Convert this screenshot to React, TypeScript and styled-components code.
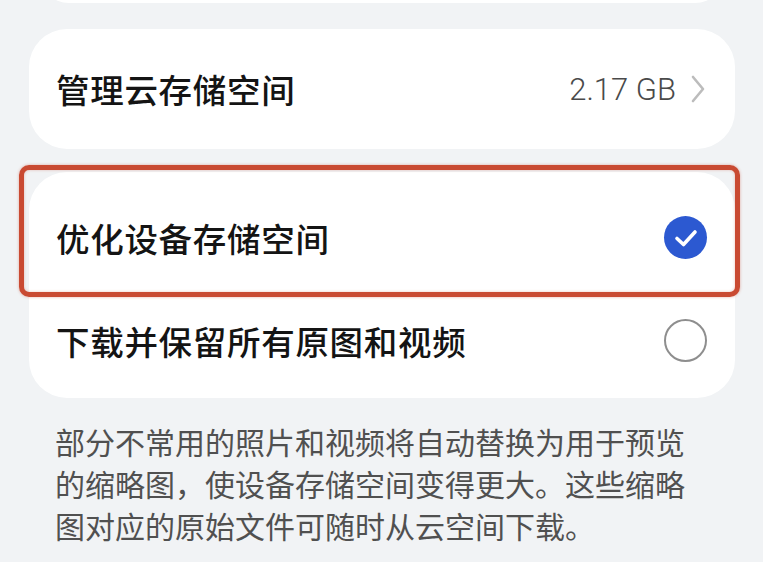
import React from "react";
import styled, { createGlobalStyle } from "styled-components";

const Global = createGlobalStyle`
  html, body { margin: 0; padding: 0; background: #f1f3f5; }
  body { font-family: "Noto Sans CJK SC", "Noto Sans", sans-serif; }
  * { box-sizing: border-box; }
`;

const Page = styled.div`
  width: 763px;
  height: 562px;
  overflow: hidden;
  padding: 0 28px 0 29px;
  display: flex;
  flex-direction: column;
  background: #f1f3f5;
`;

const TopCard = styled.div`
  height: 60px;
  margin: -57px 10px 0 10px;
  background: #fff;
  border-radius: 38px;
  flex-shrink: 0;
`;

const Card = styled.div<{ $mt: number; $pt?: number; $pb?: number }>`
  position: relative;
  margin-top: ${(p) => p.$mt}px;
  background: #fff;
  border-radius: 38px;
  padding: ${(p) => p.$pt ?? 0}px 0 ${(p) => p.$pb ?? 0}px;
  flex-shrink: 0;
`;

const Row = styled.div<{ $h: number }>`
  height: ${(p) => p.$h}px;
  display: flex;
  align-items: center;
  padding: 0 29px 0 27px;
`;

const Label = styled.div`
  flex: 1;
  font-size: 33.5px;
  font-weight: 500;
  color: #141414;
  letter-spacing: 0.7px;
  line-height: 1;
`;

const Value = styled.span`
  font-family: Roboto, "Noto Sans", sans-serif;
  font-weight: 300;
  font-size: 31px;
  color: #4a4a4a;
  margin-right: 14px;
`;

const Highlight = styled.div`
  position: absolute;
  left: -10px;
  top: -7px;
  width: 721px;
  height: 132px;
  border: 5px solid #c94a32;
  border-radius: 10px;
  box-shadow: 0 0 3px rgba(201, 74, 50, 0.45), inset 0 0 3px rgba(201, 74, 50, 0.35);
  pointer-events: none;
`;

const Radio = styled.div<{ $on?: boolean }>`
  width: 43px;
  height: 43px;
  border-radius: 50%;
  display: flex;
  align-items: center;
  justify-content: center;
  background: ${(p) => (p.$on ? "#2c59d1" : "transparent")};
  border: ${(p) => (p.$on ? "none" : "2px solid #8e8e8e")};
  margin-right: -1px;
`;

const Note = styled.p`
  margin: 22px 0 0 0;
  padding: 0 34px 0 26px;
  font-size: 30px;
  line-height: 42px;
  color: #505050;
`;

const Chevron = () => (
  <svg width="16" height="28" viewBox="0 0 16 28">
    <path d="M3 2 L13 14 L3 26" fill="none" stroke="#bcbcbc" strokeWidth="2.6" strokeLinecap="round" strokeLinejoin="round" />
  </svg>
);

const Check = () => (
  <svg width="24" height="20" viewBox="0 0 24 20">
    <path d="M3 10.5 L9.5 16.5 L21 4" fill="none" stroke="#fff" strokeWidth="3.6" strokeLinecap="round" strokeLinejoin="round" />
  </svg>
);

export default function App() {
  return (
    <Page>
      <Global />
      <TopCard />
      <Card $mt={26}>
        <Row $h={120}>
          <Label>管理云存储空间</Label>
          <Value>2.17 GB</Value>
          <Chevron />
        </Row>
      </Card>
      <Card $mt={23} $pt={14} $pb={6}>
        <Row $h={103}>
          <Label>优化设备存储空间</Label>
          <Radio $on>
            <Check />
          </Radio>
        </Row>
        <Row $h={103}>
          <Label>下载并保留所有原图和视频</Label>
          <Radio />
        </Row>
        <Highlight />
      </Card>
      <Note>部分不常用的照片和视频将自动替换为用于预览的缩略图，使设备存储空间变得更大。这些缩略图对应的原始文件可随时从云空间下载。</Note>
    </Page>
  );
}
